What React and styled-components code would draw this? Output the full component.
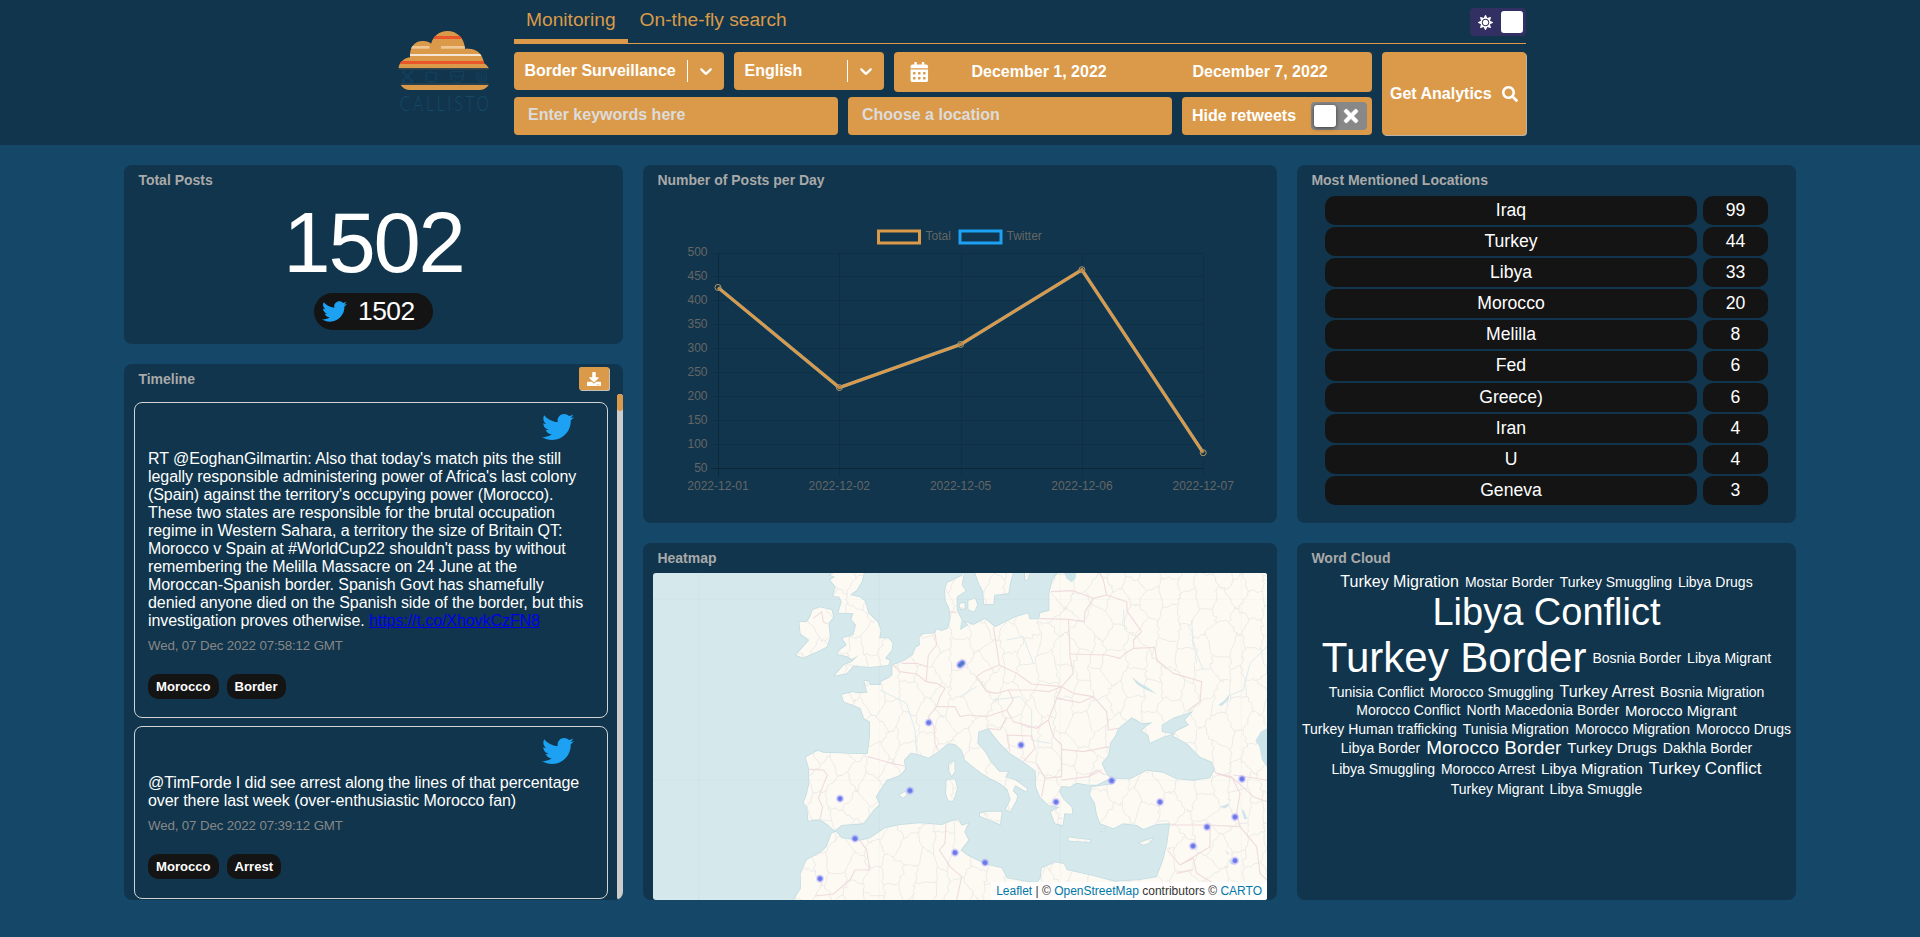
import React from "react";
import styled, { createGlobalStyle } from "styled-components";
import { FaTwitter, FaSun, FaTimes, FaSearch, FaCalendarAlt, FaDownload } from "react-icons/fa";

const orange = "#db9a4a";
const panel = "#10354c";
const dark = "#141414";
const sans = '"Liberation Sans", Arial, sans-serif';

const GlobalStyle = createGlobalStyle`
  * { box-sizing: border-box; }
  body { margin: 0; background: #144768; font-family: ${sans}; font-size: 16px; color: #fff; overflow: hidden; }
`;

const Page = styled.div`
  height: 937px;
  display: flex;
  flex-direction: column;
`;

/* ---------- header ---------- */
const Header = styled.header`
  height: 145px;
  flex: none;
  background: ${panel};
  display: flex;
  padding-left: 395px;
`;
const LogoBox = styled.div`
  width: 119px;
  padding-top: 28px;
  svg { overflow: visible; }
`;
const Controls = styled.div`
  width: 1013px;
`;
const Tabs = styled.nav`
  display: flex;
  width: 1012px;
  height: 44px;
  border-bottom: 1px solid ${orange};
`;
const Tab = styled.a`
  height: 44px;
  padding: 9px 12px 0;
  font-size: 19.2px;
  line-height: 22px;
  color: ${orange};
  border-bottom: ${(p) => (p.$active ? `5px solid ${orange}` : "none")};
`;
const Switch = styled.div`
  width: 56px;
  height: 28px;
  border-radius: 4px;
  display: flex;
  align-items: center;
  justify-content: space-between;
  flex-direction: ${(p) => (p.$on ? "row" : "row-reverse")};
  padding: ${(p) => (p.$on ? "0 3px 0 8px" : "0 6px 0 3px")};
  background: ${(p) => (p.$on ? "#323062" : "#888")};
  margin: ${(p) => (p.$on ? "8px 0 0 auto" : "0 5px 0 auto")};
`;
const Knob = styled.span`
  width: 22px;
  height: 22px;
  border-radius: 3px;
  background: #fff;
  box-shadow: ${(p) => (p.$raised ? "0 1px 4px rgba(0,0,0,.6)" : "none")};
`;
const Filters = styled.div`
  display: flex;
  gap: 10px;
  margin-top: 8px;
`;
const FilterRows = styled.div`
  width: 858px;
  display: flex;
  flex-direction: column;
  gap: 5px;
`;
const FilterRow = styled.div`
  display: flex;
  align-items: flex-start;
  gap: 10px;
`;
const Field = styled.div`
  width: ${(p) => p.$w}px;
  height: ${(p) => p.$h || 38}px;
  flex: none;
  display: flex;
  align-items: center;
  border-radius: 4px;
  background: ${orange};
  font-weight: bold;
  white-space: nowrap;
`;
const SelectValue = styled.span`
  flex: 1;
  padding-left: 10.5px;
`;
const Separator = styled.span`
  width: 1px;
  height: 22px;
  background: #fff;
`;
const Placeholder = styled.span`
  padding: 0 0 3px 14px;
  color: #dcdcdc;
`;
const DateValue = styled.span`
  width: 221px;
  text-align: center;
`;
const CalendarIcon = styled(FaCalendarAlt)`
  width: 34.6px;
  height: 20px;
  padding-left: 16px;
  flex: none;
  box-sizing: border-box;
`;
const RetweetLabel = styled.span`
  padding-left: 10px;
`;
const AnalyticsButton = styled.div`
  width: 144px;
  height: 83px;
  display: flex;
  align-items: center;
  gap: 10px;
  padding-left: 8px;
  border-radius: 4px;
  background: ${orange};
  box-shadow: 1px 1px 0 #b9b3a8;
  font-weight: bold;
  white-space: nowrap;
`;

/* ---------- dashboard ---------- */
const Dashboard = styled.main`
  display: grid;
  grid-template-columns: 499px 634px 499px;
  gap: 20px;
  padding: 20px 124px 0;
`;
const Column = styled.div`
  display: flex;
  flex-direction: column;
  gap: 20px;
`;
const Card = styled.section`
  height: ${(p) => p.$h}px;
  background: ${panel};
  border-radius: 8px;
  overflow: hidden;
  display: flex;
  flex-direction: column;
`;
const CardHead = styled.div`
  height: 30px;
  flex: none;
  display: flex;
  justify-content: space-between;
  padding: 3px 14px 0 14.4px;
`;
const CardTitle = styled.h2`
  margin: 4px 0 0;
  font-size: 14px;
  line-height: 16px;
  color: #a9a9a9;
`;
const BigTotal = styled.div`
  font-size: 85px;
  line-height: 96px;
  letter-spacing: -2.2px;
  text-align: center;
`;
const TotalPill = styled.div`
  width: 119px;
  height: 37px;
  margin: 2px 0 0 190px;
  padding-left: 8px;
  display: flex;
  align-items: center;
  gap: 11px;
  border-radius: 19px;
  background: ${dark};
  color: #fff;
  font-size: 26.4px;
  letter-spacing: -0.5px;
`;
const DownloadButton = styled.div`
  width: 30px;
  height: 23px;
  display: flex;
  align-items: center;
  justify-content: center;
  border-radius: 2px;
  background: ${orange};
  box-shadow: 1px 1px 0 #c4c0ba;
`;
const TimelineBody = styled.div`
  flex: 1;
  display: flex;
  justify-content: space-between;
  padding-left: 10px;
`;
const TweetList = styled.div`
  width: 474px;
  padding-top: 8px;
  display: flex;
  flex-direction: column;
  gap: 8px;
`;
const ScrollTrack = styled.div`
  width: 6px;
  border-radius: 3px;
  background: #ccc;
`;
const ScrollThumb = styled.div`
  height: 17px;
  border-radius: 3px;
  background: ${orange};
`;
const Tweet = styled.article`
  height: ${(p) => p.$h}px;
  border: 1px solid #d3d3d3;
  border-radius: 8px;
  padding: 8px 13px 0;
`;
const TweetIcon = styled.div`
  height: 39px;
  padding-right: 20px;
  display: flex;
  justify-content: flex-end;
`;
const TweetText = styled.p`
  margin: 0;
  width: 446px;
  line-height: 18px;
  letter-spacing: -0.07px;
`;
const TweetLink = styled.a`
  color: #0000ee;
  text-decoration: underline;
`;
const TweetDate = styled.div`
  margin-top: 8px;
  font-size: 13.3px;
  letter-spacing: -0.13px;
  line-height: 16px;
  color: #888;
`;
const Tags = styled.div`
  display: flex;
  gap: 8px;
  margin-top: 19.5px;
`;
const Tag = styled.span`
  height: 25px;
  line-height: 25px;
  padding: 0 8px;
  border-radius: 10px;
  background: ${dark};
  font-size: 13.1px;
  font-weight: bold;
`;
const LocationList = styled.div`
  margin: 1px 28px 0;
  display: grid;
  grid-template-columns: 372px 65px;
  gap: 2px 6px;
`;
const LocationCell = styled.div`
  height: 29.1px;
  line-height: 29px;
  border-radius: 10px;
  background: ${dark};
  text-align: center;
  font-size: 17.6px;
`;
const Cloud = styled.div`
  margin: -1px 0 0;
  text-align: center;
`;
const Word = styled.span`
  display: inline-block;
  vertical-align: middle;
  margin: 0 3px;
  font-size: ${(p) => p.$s}px;
`;
const MapFrame = styled.div`
  width: 614px;
  height: 327px;
  margin-left: 10px;
  border-radius: 3px;
  overflow: hidden;
  position: relative;
`;
const Attribution = styled.div`
  position: absolute;
  right: 0;
  bottom: 0;
  height: 18px;
  padding: 0 5px;
  line-height: 18px;
  font-size: 12px;
  color: #333;
  background: rgba(255, 255, 255, 0.8);
  a { color: #0078a8; }
`;

const Logo = () => (
  <svg width="100" height="87" viewBox="45 84 300 261">
    <defs>
      <clipPath id="cloud">
        <path d="M55 205C58 188 70 175 90 172C88 140 105 122 130 123C140 123 148 126 153 131C160 108 178 93 202 93C232 93 254 115 255 147C285 142 308 158 312 190Q322 195 327 205Z" />
      </clipPath>
    </defs>
    <g clipPath="url(#cloud)">
      <rect x="50" y="90" width="280" height="120" fill={orange} />
      <rect x="150" y="108" width="100" height="9" fill="#e8562a" />
      <rect x="90" y="138" width="58" height="8" fill="#efc795" />
      <rect x="183" y="138" width="80" height="8" fill="#efc795" />
      <rect x="80" y="162" width="230" height="6" fill="#f5e6d3" />
      <rect x="50" y="183" width="263" height="9" fill="#e8562a" />
    </g>
    <path d="M57 207H327M62 252H326" stroke="#5c5650" strokeWidth="2" />
    <path d="M62 255H326Q316 270 298 270H90Q72 270 62 255Z" fill={orange} />
    <g fill="none" stroke="#164565" strokeWidth="2.4">
      <path d="M70 217L94 243M94 217L70 243M76 224h12v12h-12z" />
      <circle cx="70" cy="217" r="4" /><circle cx="94" cy="217" r="4" />
      <circle cx="70" cy="243" r="4" /><circle cx="94" cy="243" r="4" />
      <path d="M140 217h28v28h-28zM147 212v5M154 212v5M161 212v5M147 245v5M154 245v5M161 245v5M135 224h5M135 231h5M135 238h5M168 224h5M168 231h5M168 238h5" />
      <path d="M211 214h40v12q-3 20-20 22q-17-2-20-22zM211 228h12q8 8 16 0h12" />
      <path d="M305 213v34M298 214q-8 2-6 9q-6 6 0 14q0 9 12 9M312 214q8 2 6 9q6 6 0 14q0 9-12 9M293 224l8 5M317 224l-8 5M293 238l9-4M317 238l-9-4" />
    </g>
    <text x="0" y="0" textLength="372" lengthAdjust="spacing" fontFamily="Lato, sans-serif" fontWeight="300" fontSize="66" fill="#164868" transform="translate(59 334) scale(0.72 1)">CALLISTO</text>
  </svg>
);

const Chevron = () => (
  <svg width="36" height="20" viewBox="-8 0 36 20" fill="#fff">
    <path d="M4.516 7.548c0.436-0.446 1.043-0.481 1.576 0l3.908 3.747 3.908-3.747c0.533-0.481 1.141-0.446 1.574 0 0.436 0.445 0.408 1.197 0 1.615-0.406 0.418-4.695 4.502-4.695 4.502-0.217 0.223-0.502 0.335-0.787 0.335s-0.57-0.112-0.789-0.335c0 0-4.287-4.084-4.695-4.502s-0.436-1.17 0-1.615z" />
  </svg>
);

const Select = ({ width, children }) => (
  <Field $w={width}>
    <SelectValue>{children}</SelectValue>
    <Separator />
    <Chevron />
  </Field>
);

/* ---------- line chart ---------- */
const days = ["2022-12-01", "2022-12-02", "2022-12-05", "2022-12-06", "2022-12-07"];
const posts = [427, 218, 308, 464, 82];
const ticks = [500, 450, 400, 350, 300, 250, 200, 150, 100, 50];
const chartX = (i) => 75 + i * 121.3;
const chartY = (v) => 303 - ((v - 50) / 450) * 215.5;

const LineChart = () => {
  const line = posts.map((v, i) => `${chartX(i)},${chartY(v)}`).join(" ");
  return (
    <svg width="634" height="328" viewBox="0 30 634 328" fontFamily="Liberation Sans, Arial, sans-serif" fontSize="12" fill="#666">
      <g fill="none" strokeWidth="3">
        <rect x="235.5" y="66" width="41" height="12" stroke={orange} />
        <rect x="317" y="66" width="41" height="12" stroke="#1da1f2" />
      </g>
      <text x="282.5" y="75">Total</text>
      <text x="363.5" y="75">Twitter</text>
      <g stroke="#000">
        {ticks.map((t) => (
          <line key={t} x1="67.5" x2={chartX(4)} y1={Math.round(chartY(t)) + 0.5} y2={Math.round(chartY(t)) + 0.5} strokeOpacity={t === 50 ? 0.22 : 0.09} />
        ))}
        {days.map((d, i) => (
          <line key={d} x1={Math.round(chartX(i)) + 0.5} x2={Math.round(chartX(i)) + 0.5} y1="88" y2="311" strokeOpacity={i === 0 ? 0.22 : 0.09} />
        ))}
      </g>
      {ticks.map((t) => (
        <text key={t} x="64.5" y={chartY(t) + 3.5} textAnchor="end">{t}</text>
      ))}
      {days.map((d, i) => (
        <text key={d} x={chartX(i)} y="325" textAnchor="middle">{d}</text>
      ))}
      <polyline points={line} fill="none" stroke="#8aa0a0" strokeWidth="3.4" />
      <polyline points={line} fill="none" stroke={orange} strokeWidth="2.8" />
      {posts.map((v, i) => (
        <circle key={days[i]} cx={chartX(i)} cy={chartY(v)} r="3" fill="rgba(0,0,0,.1)" stroke="#b39a6c" />
      ))}
    </svg>
  );
};

/* ---------- map ---------- */
const mainland =
  "M970 129L964 138L940 150L922 158L915 180L917 212L928 235L932 262L925 295L905 303L890 298L885 310L850 312L838 322L840 345L828 352L818 374L800 388L775 400L757 405L757 435L745 445L722 455L722 465L690 465L685 453L673 453L682 488L650 490L640 486L605 494L612 515L640 525L662 535L672 565L690 575L690 620L683 672L640 672L600 670L550 668L533 662L515 672L497 682L507 715L508 760L500 795L490 820L502 830L505 872L540 868L565 885L583 902L605 885L670 880L690 855L700 840L718 823L707 800L720 780L740 750L780 735L795 718L792 690L812 668L835 673L865 683L890 668L925 640L945 642L965 660L975 690L1000 710L1025 730L1050 745L1080 760L1102 778L1112 808L1098 838L1110 845L1128 812L1132 797L1118 782L1126 766L1160 785L1160 775L1125 750L1095 742L1105 725L1078 725L1052 695L1035 665L1012 640L1015 605L1045 595L1060 615L1080 640L1110 670L1150 695L1187 722L1188 770L1200 800L1225 825L1260 832L1232 845L1245 880L1268 886L1273 850L1297 852L1295 832L1270 808L1258 785L1265 768L1290 770L1310 758L1345 764L1370 764L1400 750L1414 745L1400 735L1385 700L1405 675L1410 640L1425 618L1435 595L1455 578L1475 562L1490 570L1505 580L1538 577L1520 588L1505 603L1525 615L1530 638L1570 620L1597 612L1565 606L1565 585L1600 563L1660 543L1635 570L1647 585L1605 606L1600 618L1640 640L1680 680L1715 695L1725 718L1710 745L1660 752L1610 748L1570 728L1520 722L1470 748L1430 747L1420 762L1355 772L1350 795L1365 820L1370 850L1380 880L1420 895L1450 880L1490 885L1510 897L1550 882L1590 880L1582 940L1570 990L1550 1042L1500 1050L1425 1055L1360 1038L1280 1020L1272 1002L1245 997L1205 1015L1202 1045L1190 1060L1100 1045L1085 1015L1035 1003L980 975L962 960L985 930L973 905L985 880L965 887L955 868L930 875L905 885L840 880L780 885L735 895L690 925L660 932L605 925L588 905L575 910L560 950L545 965L500 990L482 1030L483 1075L460 1112H1885V127H1255L1238 150L1228 190V242L1200 250L1198 268L1168 268L1164 250L1125 262L1065 292L1035 266L1000 285L975 275L985 285L960 300L965 270L950 240V200L977 182L965 165L972 127Z";
const islands = [
  "M585 127H672L665 155L650 180L630 195L660 202L675 214L685 250L712 275L722 300L718 325L745 325L758 340L755 360L735 385L750 392L745 405L690 411L640 407L620 430L583 437L612 405L635 396L657 375L636 388L622 379L592 372L597 362L620 345L607 325L640 315L648 285L634 268L640 250L595 248L605 215L598 200L580 198L587 170L570 150L585 140L570 135Z",
  "M510 262L518 240L540 232L575 240L580 262L565 280L570 320L560 350L530 365L490 383L468 375L490 350L508 330L482 312L478 275L500 277Z",
  "M920 750L945 748L951 775L940 812L925 812L918 790Z",
  "M927 702L943 694L944 725L935 738L927 720Z",
  "M1020 850L1045 845L1085 845L1080 883L1055 872L1020 858Z",
  "M1285 922L1305 925L1350 930L1350 936L1287 932Z",
  "M1498 938L1515 932L1540 924L1528 938L1510 945Z",
  "M778 795L795 785L801 794L788 803Z",
  "M1005 127L1015 155L1030 185L1032 222L1060 222L1063 194L1105 190L1110 160L1119 127Z",
  "M985 212L1005 205L1012 225L1002 245L985 238Z",
  "M958 222L973 218L975 235L963 238Z",
  "M1155 127H1170L1162 150L1155 148Z",
  "M1383 905L1397 895L1392 902Z",
];
const waters = [
  "M1881 595L1862 605L1846 632L1858 650L1866 690L1881 712Z",
  "M1272 127H1307L1307 145L1295 157L1280 146Z",
  "M1475 440L1500 460L1520 470L1550 492L1515 478L1490 462Z",
  "M1735 525L1755 510L1770 490L1765 510L1745 528Z",
  "M1740 830L1770 820L1758 835Z",
  "M1805 838L1812 842L1822 866L1812 868Z",
  "M1755 960L1766 970L1765 976ZM1765 985L1785 1005L1772 1003Z",
];
const borders = [
  "M757 403L780 425L830 432L858 455L890 460L915 475L900 500L890 530L865 560L882 590L885 640L895 662",
  "M683 680L720 690L755 700L792 708",
  "M507 718L550 720L562 735L548 770L535 805L548 830L540 868",
  "M885 310L890 345L865 375L862 410L830 400L785 400M862 410L858 455",
  "M1060 292L1070 350L1078 405L1030 425L1010 440L1040 485L1070 490L1105 480L1120 510L1100 540L1040 560L985 555L960 560L945 530L890 530",
  "M1078 405L1130 430L1175 462L1265 470L1300 430L1290 380L1288 320L1285 268L1200 266",
  "M1232 185L1300 182L1360 205L1335 245L1332 275L1285 268M1360 205L1400 195L1390 150L1380 129",
  "M1460 215L1462 245L1505 305L1480 330L1482 355L1455 370L1440 385L1400 375L1290 372M1400 195L1460 215",
  "M1480 355L1545 352L1550 390L1600 430L1685 455L1680 515L1645 540",
  "M1265 470L1250 505L1320 518L1360 500L1400 545L1405 600L1435 595M1265 470L1300 490L1360 500",
  "M1105 480L1175 480L1225 485L1265 470M1100 540L1120 575L1190 595L1225 570L1250 505",
  "M1045 595L1080 600L1100 560M1100 615L1175 618L1185 655L1150 695M1100 615L1110 665",
  "M1225 570L1240 620L1265 645L1265 740L1215 745L1190 700M1265 658L1330 665L1408 650M1265 750L1345 740L1385 720",
  "M1215 745L1205 800M1345 740L1370 720L1395 735",
  "M928 245L950 248",
  "M1690 690L1730 730L1775 740L1800 790L1790 850L1800 890L1700 885L1590 885M1800 890L1850 950L1860 1030L1881 1050",
  "M1582 960L1620 1005L1710 950L1710 885M1620 1005L1660 985L1670 1030L1780 1095M1610 1030L1660 1018",
  "M1730 730L1780 745L1840 800L1881 815M1780 735L1881 750",
  "M660 932L680 960L690 1020L645 1020L630 1050L580 1092L525 1098",
  "M918 880L915 940L898 960L930 1010L965 1040L950 1110",
  "M520 265L545 245L550 275L562 282",
];
const heat = [
  [960, 405], [967, 399], [866, 578], [600, 806], [810, 782], [645, 926], [945, 968], [540, 1046], [1143, 645],
  [1415, 752], [1248, 816], [1560, 816], [1806, 747], [1785, 861], [1701, 891], [1659, 948], [1785, 992], [1035, 998],
];

const noise = (a, b) => {
  const n = Math.sin(a * 127.1 + b * 311.7) * 43758.5453;
  return n - Math.floor(n) - 0.5;
};

/* Irregular cells that stand for the regional boundaries. */
const regionMesh = (() => {
  const w = 52;
  const h = 46;
  const node = (i, j) => [
    i * w + ((i + j) % 2 ? 8 : -8) + noise(i, j) * 34,
    j * h + noise(j + 9, i) * 30,
  ];
  const crooked = (a, b, k) => {
    let d = `M${a[0].toFixed(1)} ${a[1].toFixed(1)}`;
    [0.2, 0.4, 0.6, 0.8].forEach((t, s) => {
      const x = a[0] + (b[0] - a[0]) * t + noise(k, s) * 11;
      const y = a[1] + (b[1] - a[1]) * t + noise(s, k) * 11;
      d += `L${x.toFixed(1)} ${y.toFixed(1)}`;
    });
    return `${d}L${b[0].toFixed(1)} ${b[1].toFixed(1)}`;
  };
  let d = "";
  for (let j = 2; j < 25; j += 1) {
    for (let i = 8; i < 38; i += 1) {
      d += crooked(node(i, j), node(i, j + 1), i * 31 + j);
      if ((i + j) % 2) d += crooked(node(i, j), node(i + 1, j), i * 17 + j * 3);
    }
  }
  return d;
})();

const HeatMap = () => (
  <svg width="614" height="327" viewBox="39 129 1842 981">
    <defs>
      <clipPath id="land">
        <path d={mainland} />
        {islands.map((d) => <path key={d} d={d} />)}
      </clipPath>
      <radialGradient id="spot">
        <stop offset="0" stopColor="#5f76e2" />
        <stop offset="0.4" stopColor="#6f7feb" />
        <stop offset="0.65" stopColor="#8a7bff" stopOpacity="0.4" />
        <stop offset="1" stopColor="#8a7bff" stopOpacity="0" />
      </radialGradient>
    </defs>
    <rect x="39" y="129" width="1842" height="981" fill="#d5e8ec" />
    <g fill="#fdfaf4" stroke="#c3dde1" strokeWidth="5" strokeLinejoin="round">
      <path d={mainland} />
      {islands.map((d) => <path key={d} d={d} />)}
    </g>
    <g fill="#fdfaf4">
      <path d={mainland} />
      {islands.map((d) => <path key={d} d={d} />)}
    </g>
    <g clipPath="url(#land)" fill="none" strokeLinejoin="round">
      <path d={regionMesh} stroke="#e9e7e4" strokeWidth="2.4" />
      <path d="M720 480L760 500L800 520L825 600L830 670M1100 330L1150 320L1180 400M1450 240L1455 300M1655 270L1660 350L1690 420M1881 350L1830 400L1810 480L1770 495M1060 510L1140 500L1175 540L1175 630L1230 640M960 500L1010 470" stroke="#dcebec" strokeWidth="3" />
      {borders.map((d) => <path key={d} d={d} stroke="#f0dbde" strokeWidth="3.4" />)}
    </g>
    <g fill="#cde4e8">{waters.map((d) => <path key={d} d={d} />)}</g>
    <path d="M39 208H1881M39 751H1881M176 129V1110M718 129V1110M1261 129V1110M1804 129V1110" stroke="#7a9aa0" strokeOpacity="0.06" strokeWidth="2.5" />
    {heat.map(([x, y]) => <circle key={`${x}-${y}`} cx={x} cy={y} r="14" fill="url(#spot)" />)}
    <path d="M959 406L968 399" stroke="#3f7fae" strokeWidth="6" strokeLinecap="round" />
  </svg>
);

/* ---------- data ---------- */
const locations = [
  ["Iraq", 99], ["Turkey", 44], ["Libya", 33], ["Morocco", 20], ["Melilla", 8],
  ["Fed", 6], ["Greece)", 6], ["Iran", 4], ["U", 4], ["Geneva", 3],
];
const words = [
  ["Turkey Migration", 16], ["Mostar Border", 14], ["Turkey Smuggling", 14], ["Libya Drugs", 14],
  ["Libya Conflict", 38], ["Turkey Border", 42], ["Bosnia Border", 14], ["Libya Migrant", 14],
  ["Tunisia Conflict", 14], ["Morocco Smuggling", 14], ["Turkey Arrest", 16], ["Bosnia Migration", 14],
  ["Morocco Conflict", 14], ["North Macedonia Border", 14], ["Morocco Migrant", 15],
  ["Turkey Human trafficking", 14], ["Tunisia Migration", 14], ["Morocco Migration", 14], ["Morocco Drugs", 14],
  ["Libya Border", 14], ["Morocco Border", 19], ["Turkey Drugs", 15], ["Dakhla Border", 14],
  ["Libya Smuggling", 14], ["Morocco Arrest", 14], ["Libya Migration", 15], ["Turkey Conflict", 17],
  ["Turkey Migrant", 14], ["Libya Smuggle", 14],
];

const TweetCard = ({ height, date, tags, children }) => (
  <Tweet $h={height}>
    <TweetIcon><FaTwitter size={32} color="#1da1f2" /></TweetIcon>
    <TweetText>{children}</TweetText>
    <TweetDate>{date}</TweetDate>
    <Tags>{tags.map((t) => <Tag key={t}>{t}</Tag>)}</Tags>
  </Tweet>
);

export default function App() {
  return (
    <Page>
      <GlobalStyle />
      <Header>
        <LogoBox><Logo /></LogoBox>
        <Controls>
          <Tabs>
            <Tab $active>Monitoring</Tab>
            <Tab>On-the-fly search</Tab>
            <Switch $on><FaSun size={15} /><Knob /></Switch>
          </Tabs>
          <Filters>
            <FilterRows>
              <FilterRow>
                <Select width={210}>Border Surveillance</Select>
                <Select width={150}>English</Select>
                <Field $w={478} $h={40}>
                  <CalendarIcon />
                  <DateValue>December 1, 2022</DateValue>
                  <DateValue>December 7, 2022</DateValue>
                </Field>
              </FilterRow>
              <FilterRow>
                <Field $w={324}><Placeholder>Enter keywords here</Placeholder></Field>
                <Field $w={324}><Placeholder>Choose a location</Placeholder></Field>
                <Field $w={190}>
                  <RetweetLabel>Hide retweets</RetweetLabel>
                  <Switch><FaTimes size={20} stroke="#fff" strokeWidth="16" /><Knob $raised /></Switch>
                </Field>
              </FilterRow>
            </FilterRows>
            <AnalyticsButton>Get Analytics <FaSearch size={16} /></AnalyticsButton>
          </Filters>
        </Controls>
      </Header>

      <Dashboard>
        <Column>
          <Card $h={179}>
            <CardHead><CardTitle>Total Posts</CardTitle></CardHead>
            <BigTotal>1502</BigTotal>
            <TotalPill><FaTwitter size={25} color="#1da1f2" />1502</TotalPill>
          </Card>
          <Card $h={536}>
            <CardHead>
              <CardTitle>Timeline</CardTitle>
              <DownloadButton><FaDownload size={14} /></DownloadButton>
            </CardHead>
            <TimelineBody>
              <TweetList>
                <TweetCard height={316} date="Wed, 07 Dec 2022 07:58:12 GMT" tags={["Morocco", "Border"]}>
                  RT @EoghanGilmartin: Also that today's match pits the still legally responsible administering
                  power of Africa's last colony (Spain) against the territory's occupying power (Morocco). These
                  two states are responsible for the brutal occupation regime in Western Sahara, a territory the
                  size of Britain QT: Morocco v Spain at #WorldCup22 shouldn't pass by without remembering the
                  Melilla Massacre on 24 June at the Moroccan-Spanish border. Spanish Govt has shamefully denied
                  anyone died on the Spanish side of the border, but this investigation proves otherwise.{" "}
                  <TweetLink>https://t.co/XhovkCzFN8</TweetLink>
                </TweetCard>
                <TweetCard height={173} date="Wed, 07 Dec 2022 07:39:12 GMT" tags={["Morocco", "Arrest"]}>
                  @TimForde I did see arrest along the lines of that percentage over there last week
                  (over-enthusiastic Morocco fan)
                </TweetCard>
              </TweetList>
              <ScrollTrack><ScrollThumb /></ScrollTrack>
            </TimelineBody>
          </Card>
        </Column>

        <Column>
          <Card $h={358}>
            <CardHead><CardTitle>Number of Posts per Day</CardTitle></CardHead>
            <LineChart />
          </Card>
          <Card $h={357}>
            <CardHead><CardTitle>Heatmap</CardTitle></CardHead>
            <MapFrame>
              <HeatMap />
              <Attribution>
                <a>Leaflet</a> | © <a>OpenStreetMap</a> contributors © <a>CARTO</a>
              </Attribution>
            </MapFrame>
          </Card>
        </Column>

        <Column>
          <Card $h={358}>
            <CardHead><CardTitle>Most Mentioned Locations</CardTitle></CardHead>
            <LocationList>
              {locations.map(([name, count]) => (
                <React.Fragment key={name}>
                  <LocationCell>{name}</LocationCell>
                  <LocationCell>{count}</LocationCell>
                </React.Fragment>
              ))}
            </LocationList>
          </Card>
          <Card $h={357}>
            <CardHead><CardTitle>Word Cloud</CardTitle></CardHead>
            <Cloud>
              {words.map(([text, size]) => <Word key={text} $s={size}>{text}</Word>)}
            </Cloud>
          </Card>
        </Column>
      </Dashboard>
    </Page>
  );
}
